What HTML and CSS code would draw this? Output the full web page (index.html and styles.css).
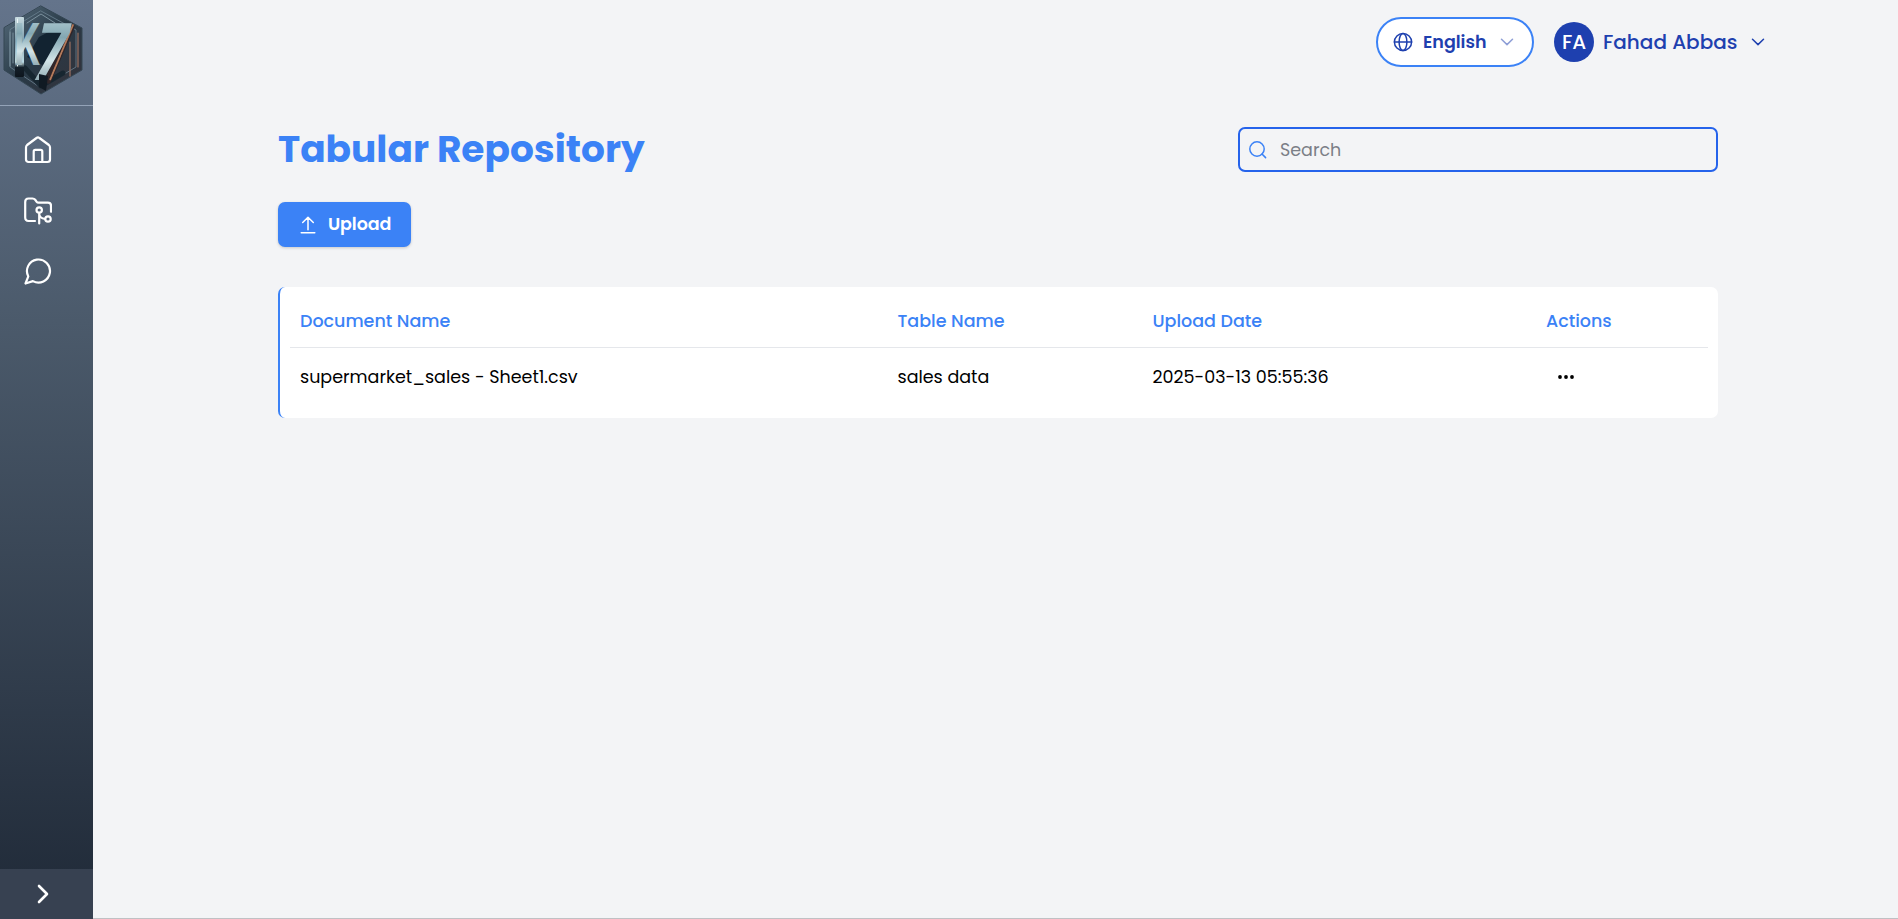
FILE: index.html
```html
<!DOCTYPE html>
<html lang="en">
<head>
<meta charset="utf-8">
<title>Tabular Repository</title>
<link rel="stylesheet" href="styles.css">
</head>
<body>
<div class="app">
  <aside class="sidebar">
    <div class="brand">
      <svg class="logo" viewBox="0 0 93 105" role="img" aria-label="K7">
        <defs>
          <linearGradient id="shell" x1="0" y1="0" x2="1" y2="1">
            <stop offset="0" stop-color="#566c7c"/><stop offset=".5" stop-color="#293a47"/><stop offset="1" stop-color="#343139"/>
          </linearGradient>
          <linearGradient id="steel" x1="0" y1="0" x2="0" y2="1">
            <stop offset="0" stop-color="#c8dee4"/><stop offset=".35" stop-color="#83a7b2"/><stop offset=".6" stop-color="#d2e4e8"/><stop offset="1" stop-color="#577681"/>
          </linearGradient>
          <linearGradient id="column" x1="0" y1="0" x2="0" y2="1">
            <stop offset="0" stop-color="#c7dae0"/><stop offset=".4" stop-color="#7d9daa"/><stop offset=".75" stop-color="#bfdce3"/><stop offset=".84" stop-color="#14202a"/><stop offset="1" stop-color="#0d151d"/>
          </linearGradient>
        </defs>
        <polygon points="41,6 82,28 82,70 41,94 4,70 4,28" fill="url(#shell)" stroke="#344653"/>
        <polygon points="41,11 76,30 76,67 41,88 10,67 10,30" fill="none" stroke="#6b8290" stroke-width=".8"/>
        <path d="M27 23l14-9 14 9M10 32v34M13 33v30" fill="none" stroke="#8299a5" stroke-width=".9"/>
        <polygon points="39,37 56,28 62,34 44,66 27,57" fill="#122331"/>
        <path d="M25 68l16 18 22-13" fill="none" stroke="#172630" stroke-width="5"/>
        <path d="M70 42v34M78 33v34" stroke="#9c7161" stroke-width="1.2"/>
        <path d="M71 27L48 80" stroke="#30262a" stroke-width="7"/>
        <path d="M73 25L50 80" stroke="#b57b5b" stroke-width="1.8" stroke-dasharray="2 1"/>
        <rect x="15" y="17" width="9" height="60" rx="1" fill="url(#column)"/>
        <path d="M17.5 19v47" stroke="#edf6f7" stroke-width="1"/>
        <text class="logo-letter" transform="translate(14 65) scale(.64 1)" font-size="58" fill="url(#steel)">K</text>
        <text class="logo-letter" transform="translate(30 80) skewX(-12) scale(.7 1)" font-size="78" fill="url(#steel)">7</text>
        <path d="M39 74l9 2-2 15-7-4z" fill="#101a23"/>
      </svg>
    </div>
    <nav class="nav">
      <a class="nav-item"><svg class="nav-icon" viewBox="0 0 28 28"><path d="M2 11.400c0-1 .4-1.800 1.100-2.400L12.500 2c.9-.7 2-.7 2.900 0l9.500 7c.7.6 1.100 1.400 1.100 2.400V23.500c0 1.500-1 2.500-2.500 2.500h-19C3 26 2 25 2 23.500zM9.700 26V15.500c0-1 .6-1.600 1.600-1.600h5.400c1 0 1.600.6 1.600 1.600V26"/></svg></a>
      <a class="nav-item"><svg class="nav-icon" viewBox="0 0 28 28"><path d="M11 24H4.500C2.300 24 1.200 22.700 1.200 20.500V5C1.200 3 2.300 1.500 4.500 1.500h4c1.200 0 2 .4 2.700 1.300l1.500 2c.5.7 1 .9 1.800.9H24c2 0 3 1 3 3v6"/><circle cx="15.200" cy="13" r="2.700"/><circle cx="24" cy="22" r="2.700"/><path d="M15.200 16v10.500M15.200 17c.3 3 2.500 4.500 5.800 4.800"/></svg></a>
      <a class="nav-item"><svg class="nav-icon" viewBox="0 0 28 28"><path d="M4.300 19.400A11.500 11.500 0 1 1 8.900 24.100L1.500 26.500z"/></svg></a>
    </nav>
    <button class="expand" aria-label="Expand"><svg class="expand-icon" viewBox="0 0 12 20"><path d="M2 2l8 8-8 8"/></svg></button>
  </aside>
  <main class="main">
    <header class="topbar">
      <button class="language">
        <svg class="globe" viewBox="0 0 20 20"><circle cx="10" cy="10" r="8.600"/><ellipse cx="10" cy="10" rx="3.900" ry="8.600"/><path d="M1.400 10h17.200"/></svg>
        <span class="language-name">English</span>
        <svg class="chevron faded" viewBox="0 0 14 8"><path d="M1.500 1.200L7 6.600l5.500-5.400"/></svg>
      </button>
      <div class="account">
        <span class="avatar">FA</span>
        <span class="account-name">Fahad Abbas</span>
        <svg class="chevron" viewBox="0 0 14 8"><path d="M1.500 1.200L7 6.600l5.500-5.400"/></svg>
      </div>
    </header>
    <section class="content">
      <div class="heading">
        <h1 class="title">Tabular Repository</h1>
        <label class="search">
          <svg class="search-icon" viewBox="0 0 20 20"><circle cx="9" cy="9" r="7.200"/><path d="M14 14l3.600 3.600"/></svg>
          <input class="search-input" type="text" placeholder="Search">
        </label>
      </div>
      <button class="upload">
        <svg class="upload-icon" viewBox="0 0 16 18"><path d="M8 13.700V1.300M2.700 6.500L8 1.200l5.300 5.300M1.200 16.700h13.600"/></svg>
        <span class="upload-label">Upload</span>
      </button>
      <div class="card">
        <div class="row head">
          <span>Document Name</span><span>Table Name</span><span>Upload Date</span><span>Actions</span>
        </div>
        <div class="row">
          <span>supermarket_sales - Sheet1.csv</span><span>sales data</span><span>2025-03-13 05:55:36</span>
          <svg class="dots" viewBox="0 0 18 6"><circle cx="3" cy="3" r="1.900"/><circle cx="9" cy="3" r="1.900"/><circle cx="15" cy="3" r="1.900"/></svg>
        </div>
      </div>
    </section>
  </main>
</div>
</body>
</html>
```
FILE: styles.css
```css
* { box-sizing: border-box; }
body { margin: 0; font-family: Poppins, Inter, "Open Sans", sans-serif; background: #f3f4f6; }
button { font: inherit; border: 0; margin: 0; padding: 0; }
svg { display: block; flex: none; fill: none; stroke-linecap: round; stroke-linejoin: round; }
span { white-space: nowrap; }

.app { display: flex; height: 919px; overflow: hidden; }
.sidebar { display: flex; flex-direction: column; flex: none; width: 93px; background: linear-gradient(#64748b, #4b5a6b 35%, #1f2937); }
.brand { height: 106px; border-bottom: 1px solid #94a3b8; }
.logo { width: 93px; height: 105px; }
.logo-letter { font-family: Inter, sans-serif; font-weight: 700; }
.nav { display: flex; flex-direction: column; gap: 32.5px; padding: 30px 0 0 24px; flex: 1; }
.nav-item { height: 28px; }
.nav-icon { width: 28px; height: 28px; stroke: #fff; stroke-width: 2.2; }
.expand { display: flex; align-items: center; height: 50px; padding: 0 0 1px 37px; background: #374151; }
.expand-icon { width: 12px; height: 20px; stroke: #fff; stroke-width: 2.6; }

.main { flex: 1; border-bottom: 1px solid #bfc1c4; }
.topbar { display: flex; justify-content: flex-end; align-items: center; gap: 20px; height: 84px; padding: 0 133px 0 0; }
.language { display: flex; align-items: center; width: 158px; height: 50px; padding-left: 15px; border: 2px solid #3b82f6; border-radius: 25px; background: #fff; color: #1e40af; }
.globe { width: 20px; height: 20px; stroke: #1e40af; stroke-width: 1.5; }
.language-name { width: 77px; margin-left: 10px; text-align: left; font-size: 17.5px; font-weight: 600; }
.chevron { width: 14px; height: 8px; stroke: #1e40af; stroke-width: 1.5; }
.faded { opacity: .5; }
.account { display: flex; align-items: center; color: #1e40af; }
.avatar { width: 40px; height: 40px; border-radius: 50%; background: #1e40af; color: #fff; font-size: 20px; font-weight: 500; line-height: 41px; text-align: center; }
.account-name { width: 148px; margin-left: 9px; font-size: 20px; font-weight: 500; }

.content { padding: 43px 180px 0 185px; }
.heading { display: flex; align-items: center; justify-content: space-between; height: 45px; }
.title { margin: 0; color: #3b82f6; font-size: 37.5px; font-weight: 700; line-height: 45px; }
.search { display: flex; align-items: center; width: 480px; height: 45px; padding-left: 8px; border: 2px solid #2563eb; border-radius: 7px; }
.search-icon { width: 20px; height: 20px; stroke: #3b82f6; stroke-width: 1.5; }
.search-input { width: 400px; margin-left: 12px; padding: 0; border: 0; outline: 0; background: none; font: 400 17.5px Poppins, Inter, sans-serif; }
.search-input::placeholder { color: #7b7f87; }
.upload { display: flex; align-items: center; width: 133px; height: 45px; margin-top: 30px; padding-left: 22px; border-radius: 7px; background: #3b82f6; color: #fff; box-shadow: 0 1px 3px rgba(0, 0, 0, .18); }
.upload-icon { width: 16px; height: 18px; stroke: #fff; stroke-width: 1.5; }
.upload-label { margin-left: 12px; padding-bottom: 2px; font-size: 17.5px; font-weight: 600; letter-spacing: -.1px; }
.card { height: 131px; margin-top: 40px; padding: 8px 10px 0; border-left: 2px solid #3b82f6; border-radius: 7px; background: #fff; }
.row { display: grid; grid-template-columns: 597.5px 255px 393.5px 1fr; align-items: center; height: 57px; padding-left: 10px; font-size: 17.5px; color: #000; }
.head { height: 53px; border-bottom: 1px solid #e5e7eb; color: #3b82f6; font-weight: 500; }
.dots { width: 18px; height: 6px; margin-left: 11px; fill: #000; }
```
